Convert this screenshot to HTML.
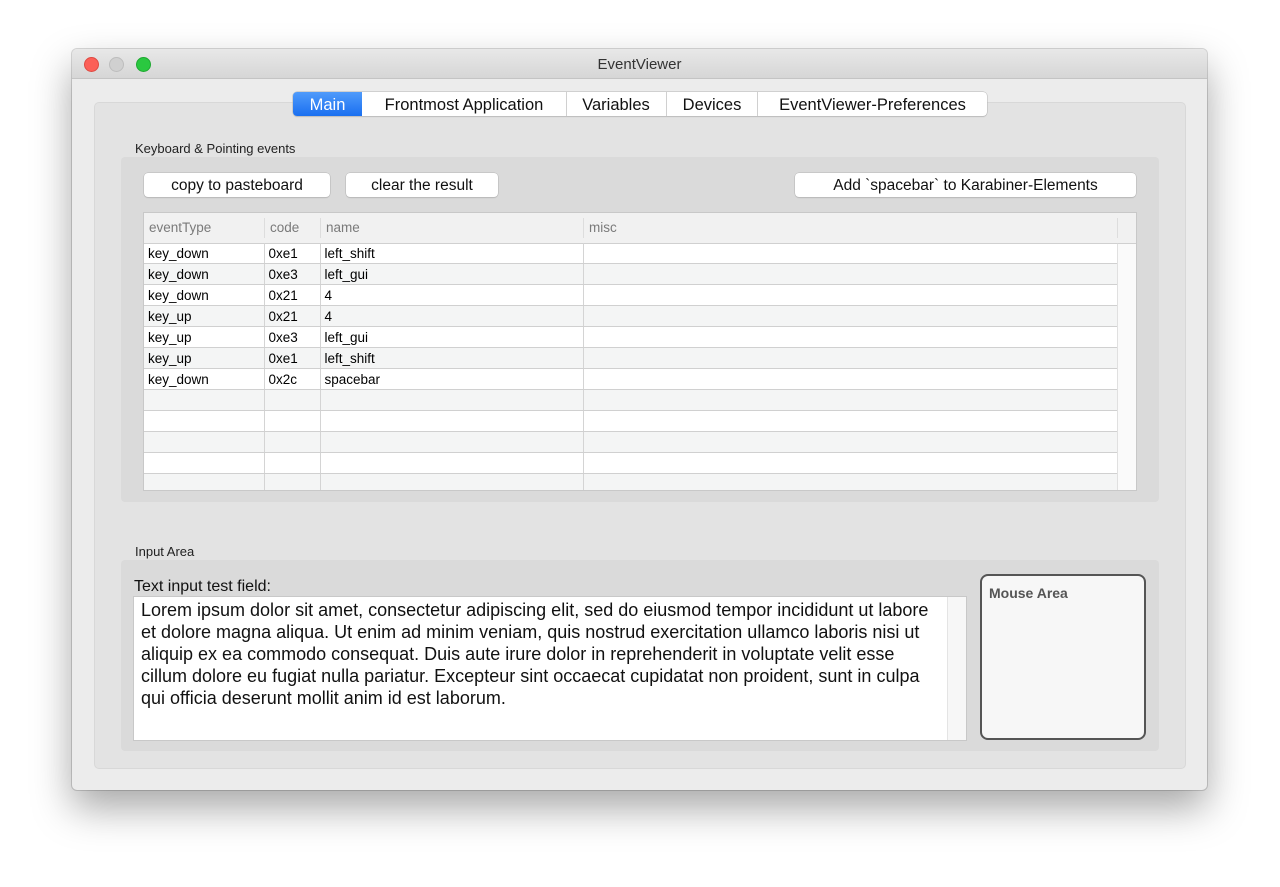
<!DOCTYPE html><html><head><style>
body{margin:0;width:1280px;height:887px;background:#fff;font-family:"Liberation Sans",sans-serif;position:relative;overflow:hidden}
.a{position:absolute}
.win{left:72px;top:49px;width:1135px;height:741px;background:#ececec;border-radius:5px;box-shadow:0 18px 40px rgba(0,0,0,.35),0 0 0 1px rgba(0,0,0,.15);overflow:hidden}
.title{left:0;top:0;width:1135px;height:29px;background:linear-gradient(#e8e8e8,#d6d6d6);border-bottom:1px solid #c4c4c4;text-align:center;font-size:15px;line-height:31px;color:#333}
.dot{width:13px;height:13px;border-radius:50%;top:8px}
.btn{background:#fff;border-radius:4px;box-shadow:0 0 0 .5px #b5b5b5,0 1px 1px rgba(0,0,0,.15);font-size:15.5px;text-align:center;line-height:26px;height:24px;color:#111}
table{border-collapse:collapse;font-size:13.5px}
td{border-right:1px solid #d4d4d4;height:20px;padding:0 0 0 4px;border-bottom:1px solid #d0d0d0}
</style></head><body>
<div class="a win">
 <div class="a title">EventViewer
  <div class="a dot" style="left:12px;background:#fc5f57;border:.5px solid #de4a42"></div>
  <div class="a dot" style="left:37px;background:#d0d0d0;border:.5px solid #bdbdbd"></div>
  <div class="a dot" style="left:64px;background:#2ac840;border:.5px solid #1ea931"></div>
 </div>
 <div class="a" style="left:23px;top:54px;width:1090px;height:665px;background:#e3e3e3;border-radius:4px;box-shadow:0 0 0 1px #d8d8d8"></div>
 <div class="a" style="left:221px;top:43px;width:694px;height:24px;background:#fff;border-radius:4px;box-shadow:0 0 0 .5px #b5b5b5,0 1px 1px rgba(0,0,0,.15);font-size:16.5px;line-height:26px;color:#111">
  <div class="a" style="left:0;width:69px;height:24px;background:linear-gradient(#4f9bfb,#1a6ff0);color:#fff;text-align:center;border-radius:4px 0 0 4px">Main</div>
  <div class="a" style="left:69px;width:204px;text-align:center;border-right:1px solid #d0d0d0;height:24px">Frontmost Application</div>
  <div class="a" style="left:273px;width:100px;text-align:center;border-right:1px solid #d0d0d0;height:24px">Variables</div>
  <div class="a" style="left:374px;width:90px;text-align:center;border-right:1px solid #d0d0d0;height:24px">Devices</div>
  <div class="a" style="left:465px;width:229px;text-align:center">EventViewer-Preferences</div>
 </div>
 <div class="a" style="left:63px;top:92px;font-size:13px;color:#222">Keyboard &amp; Pointing events</div>
 <div class="a" style="left:49px;top:108px;width:1038px;height:345px;background:#dadada;border-radius:4px"></div>
 <div class="a btn" style="left:72px;top:124px;width:186px">copy to pasteboard</div>
 <div class="a btn" style="left:274px;top:124px;width:152px">clear the result</div>
 <div class="a btn" style="left:723px;top:124px;width:341px">Add `spacebar` to Karabiner-Elements</div>
 <div class="a" style="left:71px;top:163px;width:994px;height:279px;background:#fff;border:1px solid #c8c8c8;box-sizing:border-box;overflow:hidden">
  <div class="a" style="left:0;top:0;width:994px;height:30px;background:#f1f1f1;border-bottom:1px solid #d0d0d0;font-size:13.5px;color:#7a7a7a;line-height:30px">
   <span class="a" style="left:5px">eventType</span><span class="a" style="left:126px">code</span><span class="a" style="left:182px">name</span><span class="a" style="left:445px">misc</span>
   <div class="a" style="left:120px;top:5px;height:20px;border-left:1px solid #ddd"></div>
   <div class="a" style="left:176px;top:5px;height:20px;border-left:1px solid #ddd"></div>
   <div class="a" style="left:439px;top:5px;height:20px;border-left:1px solid #ddd"></div>
   <div class="a" style="left:973px;top:5px;height:20px;border-left:1px solid #ddd"></div>
  </div>
  <table class="a" style="left:0;top:30px;width:974px">
   <colgroup><col style="width:120px"><col style="width:56px"><col style="width:263px"><col></colgroup>
   <tr><td>key_down</td><td>0xe1</td><td>left_shift</td><td></td></tr>
   <tr style="background:#f4f5f5"><td>key_down</td><td>0xe3</td><td>left_gui</td><td></td></tr>
   <tr><td>key_down</td><td>0x21</td><td>4</td><td></td></tr>
   <tr style="background:#f4f5f5"><td>key_up</td><td>0x21</td><td>4</td><td></td></tr>
   <tr><td>key_up</td><td>0xe3</td><td>left_gui</td><td></td></tr>
   <tr style="background:#f4f5f5"><td>key_up</td><td>0xe1</td><td>left_shift</td><td></td></tr>
   <tr><td>key_down</td><td>0x2c</td><td>spacebar</td><td></td></tr>
   <tr style="background:#f4f5f5"><td></td><td></td><td></td><td></td></tr>
   <tr><td></td><td></td><td></td><td></td></tr>
   <tr style="background:#f4f5f5"><td></td><td></td><td></td><td></td></tr>
   <tr><td></td><td></td><td></td><td></td></tr>
   <tr style="background:#f4f5f5"><td></td><td></td><td></td><td></td></tr>
  </table>
  <div class="a" style="left:973px;top:31px;width:20px;height:250px;background:#fafafa;border-left:1px solid #e0e0e0"></div>
 </div>
 <div class="a" style="left:63px;top:495px;font-size:13px;color:#222">Input Area</div>
 <div class="a" style="left:49px;top:511px;width:1038px;height:191px;background:#dadada;border-radius:4px"></div>
 <div class="a" style="left:62px;top:529px;font-size:16px;color:#111">Text input test field:</div>
 <div class="a" style="left:62px;top:548px;width:832px;height:143px;background:#fff;box-shadow:0 0 0 1px #c8c8c8;overflow:hidden">
  <div class="a" style="left:7px;top:2px;white-space:nowrap;font-size:18px;line-height:22px;color:#111">Lorem ipsum dolor sit amet, consectetur adipiscing elit, sed do eiusmod tempor incididunt ut labore<br>et dolore magna aliqua. Ut enim ad minim veniam, quis nostrud exercitation ullamco laboris nisi ut<br>aliquip ex ea commodo consequat. Duis aute irure dolor in reprehenderit in voluptate velit esse<br>cillum dolore eu fugiat nulla pariatur. Excepteur sint occaecat cupidatat non proident, sunt in culpa<br>qui officia deserunt mollit anim id est laborum.</div>
  <div class="a" style="left:813px;top:0;width:19px;height:143px;background:#f7f7f7;border-left:1px solid #e4e4e4"></div>
 </div>
 <div class="a" style="left:908px;top:525px;width:162px;height:162px;background:#f7f7f7;border:2px solid #555;border-radius:8px">
  <div class="a" style="left:7px;top:9px;font-size:14px;font-weight:bold;color:#555">Mouse Area</div>
 </div>
</div>
</body></html>
